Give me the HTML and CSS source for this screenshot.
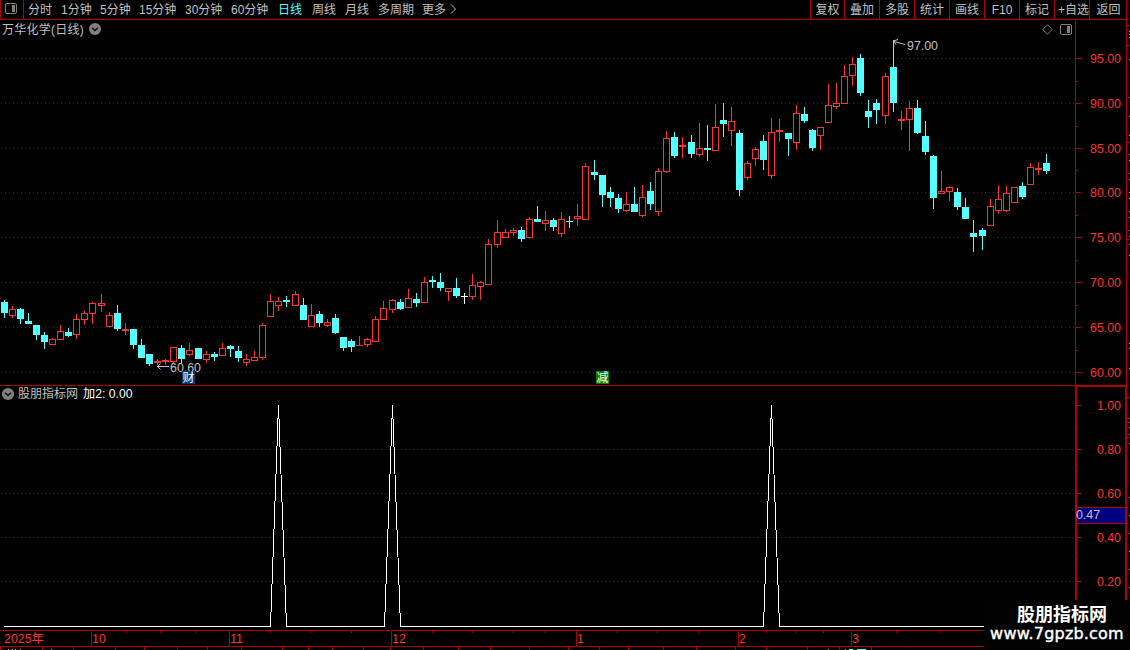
FILE: index.html
```
<!DOCTYPE html>
<html lang="zh-CN">
<head>
    <meta charset="UTF-8">
    <title>万华化学 日线</title>
    <link rel="stylesheet" href="styles.css">
</head>
<body>
    <div class="toolbar">
        <div class="layout-btn">
            <svg width="12" height="11"><rect x="0.5" y="0.5" width="11" height="10" rx="1.5" class="icon-line"/><rect x="7" y="2" width="3" height="7" class="icon-fill"/></svg>
        </div>
        <div class="periods">
            <span>分时</span>
            <span>1分钟</span>
            <span>5分钟</span>
            <span>15分钟</span>
            <span>30分钟</span>
            <span>60分钟</span>
            <span class="active">日线</span>
            <span>周线</span>
            <span>月线</span>
            <span>多周期</span>
            <span>更多</span>
            <svg width="7" height="10"><path d="M1 0.5 L5.5 5 L1 9.5" class="more"/></svg>
        </div>
        <div class="tools">
            <span>复权</span>
            <span>叠加</span>
            <span>多股</span>
            <span>统计</span>
            <span>画线</span>
            <span>F10</span>
            <span>标记</span>
            <span>+自选</span>
            <span>返回</span>
        </div>
    </div>

    <div class="main">
        <div class="charts">
            <div class="panel price-panel">
                <div class="panel-title">
                    <span>万华化学(日线)</span>
                    <svg width="12" height="12"><circle cx="6" cy="6" r="6" class="icon-fill"/><path d="M3 4.7 L6 7.5 L9 4.7" class="chevron"/></svg>
                </div>
                <div class="panel-icons">
                    <svg width="11" height="11"><path d="M5.5 0.7 L10.3 5.5 L5.5 10.3 L0.7 5.5 Z" class="icon-line"/></svg>
                    <svg width="12" height="11"><rect x="0.5" y="0.5" width="11" height="10" rx="1.5" class="icon-line"/><rect x="7" y="2" width="3" height="7" class="icon-fill"/></svg>
                </div>
                <svg id="price" width="1075" height="365" viewBox="0 20 1075 365"></svg>
                <svg id="priceAxis" class="axis" width="51" height="365" viewBox="1075 20 51 365"></svg>
            </div>
            <div class="panel signal-panel">
                <div class="panel-title">
                    <svg width="12" height="12"><circle cx="6" cy="6" r="6" class="icon-fill"/><path d="M3 4.7 L6 7.5 L9 4.7" class="chevron"/></svg>
                    <span>股朋指标网</span>
                    <span class="value">加2: 0.00</span>
                </div>
                <svg id="signal" width="1075" height="245" viewBox="0 385 1075 245"></svg>
                <svg id="signalAxis" class="axis" width="51" height="245" viewBox="1075 385 51 245"></svg>
            </div>
            <svg id="time" class="time" width="1126" height="20" viewBox="0 630 1126 20"></svg>
        </div>
        <svg id="strip" width="4" height="650" viewBox="1126 0 4 650"></svg>
    </div>

    <div class="brand">
        <div class="brand-name">股朋指标网</div>
        <div class="brand-url">www.7gpzb.com</div>
    </div>

    <script src="chart.js"></script>
</body>
</html>
```
FILE: styles.css
```
body {
    margin: 0;
    width: 1130px;
    height: 650px;
    overflow: hidden;
    position: relative;
    background-color: #000;
    color: #c0c0c0;
    font-family: "Liberation Sans", "Noto Sans CJK SC", sans-serif;
    font-size: 12px;
}

svg {
    display: block;
    flex: none;
}

.toolbar {
    display: flex;
    box-sizing: border-box;
    width: 1127px;
    height: 20px;
    line-height: 21px;
    white-space: nowrap;
    border-bottom: 1px solid #b00000;
    border-left: 1px solid #b00000;
}

.layout-btn {
    box-sizing: border-box;
    width: 23px;
    padding: 3px 0 0 4px;
    border-right: 1px solid #b00000;
}

.periods {
    display: grid;
    grid-template-columns: 33px 39px 39px 46px 46px 47px 34px 33px 33px 44px 28px 8px;
    grid-template-rows: 19px;
    padding-left: 4px;
    margin-right: auto;
}

.periods svg {
    margin-top: 4px;
}

.periods .active {
    color: #54ffff;
}

.tools {
    display: grid;
    grid-template-columns: 34px repeat(7, 35px) 38px;
    grid-template-rows: 19px;
}

.tools span {
    border-left: 1px solid #b00000;
    text-align: center;
}

.tools span:nth-child(8) {
    text-align: right;
}

.main {
    display: flex;
}

.charts {
    width: 1126px;
}

#strip {
    margin-top: -20px;
}

.panel {
    display: flex;
    position: relative;
}

.panel-title {
    position: absolute;
    top: 0;
    left: 2px;
    display: flex;
    align-items: center;
    gap: 5px;
    height: 18px;
    line-height: 16px;
}

.price-panel .panel-title span {
    margin-top: 1px;
    letter-spacing: 0.25px;
}

.signal-panel .panel-title {
    gap: 4px;
}

.signal-panel .panel-title .value {
    margin-left: 1px;
    color: #fff;
    font-size: 12.2px;
}

.panel-icons {
    position: absolute;
    top: 4px;
    left: 1042px;
    display: flex;
    gap: 7px;
}

.icon-line {
    fill: none;
    stroke: #808080;
}

.icon-fill {
    fill: #808080;
}

.chevron {
    fill: none;
    stroke: #111;
    stroke-width: 1.5;
}

.more {
    fill: none;
    stroke: #c0c0c0;
}

.frame {
    fill: #b00000;
}

.grid {
    stroke: #a00000;
    stroke-dasharray: 1 3;
    shape-rendering: crispEdges;
}

.up {
    fill: #ff3232;
}

.down {
    fill: #54ffff;
}

.flat {
    fill: #fff;
}

.hollow {
    fill: #000;
}

.signal-line {
    fill: none;
    stroke: #fff;
    shape-rendering: crispEdges;
}

.arrow {
    fill: none;
    stroke: #c0c0c0;
}

.note {
    fill: #c0c0c0;
    font-size: 12.4px;
}

.label {
    fill: #ff3232;
    font-size: 12.4px;
}

.current {
    fill: #000080;
}

.tag-blue {
    fill: #003c78;
}

.tag-green {
    fill: #008000;
}

.tag-text {
    fill: #fff;
    font-size: 12px;
}

.brand {
    position: absolute;
    left: 984px;
    top: 600px;
    width: 146px;
    height: 50px;
    background-color: #020202;
    color: #fff;
    text-align: center;
}

.brand-name {
    margin-left: 10px;
    font-size: 18px;
    font-weight: bold;
    line-height: 30px;
}

.brand-url {
    font-family: "DejaVu Sans", sans-serif;
    font-size: 16px;
    letter-spacing: 0.2px;
    line-height: 8px;
    -webkit-text-stroke: 0.4px #fff;
}
```
FILE: chart.js
```
// x, high, body top, body bottom, low, direction (u / d / f)
const candles = [
    [4,300,302,313,318,'d'], [12,306,309,316,318,'u'], [20,308,309,319,324,'d'], [28,313,321,324,324,'d'],
    [36,325,325,335,340,'d'], [44,332,335,342,349,'d'], [52,338,339,345,345,'u'], [60,325,331,340,340,'u'],
    [68,328,332,336,337,'d'], [76,314,319,335,339,'u'], [84,311,313,320,325,'u'], [92,302,303,314,324,'u'],
    [101,294,303,306,312,'u'], [109,312,315,327,327,'u'], [117,305,313,329,331,'d'], [125,323,329,331,335,'u'],
    [133,329,329,345,349,'d'], [141,339,345,358,358,'d'], [149,354,354,364,366,'d'], [157,359,361,363,365,'u'],
    [165,359,360,362,365,'u'], [173,347,347,362,363,'u'], [181,345,348,359,363,'d'], [189,343,350,355,356,'u'],
    [198,348,348,359,359,'d'], [206,351,354,360,363,'u'], [214,352,354,357,361,'d'], [222,343,348,356,356,'u'],
    [230,345,346,349,357,'d'], [238,346,351,358,362,'d'], [246,354,359,363,366,'u'], [254,351,357,361,361,'u'],
    [262,323,325,358,360,'u'], [270,294,301,317,317,'u'], [278,297,301,306,311,'u'], [286,296,300,302,307,'d'],
    [295,291,294,306,306,'u'], [303,298,305,320,320,'d'], [311,304,315,327,327,'u'], [319,311,314,323,327,'d'],
    [327,319,322,326,327,'u'], [335,314,318,333,334,'d'], [343,337,337,348,351,'d'], [351,339,341,347,352,'d'],
    [359,336,345,346,346,'u'], [367,338,339,345,347,'u'], [375,316,319,342,342,'u'], [383,301,308,320,320,'u'],
    [392,299,300,310,313,'u'], [400,299,302,309,310,'d'], [408,289,298,308,308,'u'], [416,293,299,303,307,'d'],
    [424,277,282,303,303,'u'], [432,276,280,282,288,'d'], [440,273,282,288,291,'d'], [448,288,288,292,301,'u'],
    [456,278,288,296,298,'d'], [464,293,296,297,304,'f'], [472,274,285,297,300,'u'], [480,281,282,287,300,'u'],
    [488,239,244,285,285,'u'], [497,220,232,245,248,'u'], [505,229,232,238,238,'u'], [513,228,230,233,236,'u'],
    [521,227,230,239,242,'d'], [529,217,219,238,239,'u'], [537,206,219,222,222,'d'], [545,211,220,224,231,'u'],
    [553,218,220,227,231,'d'], [561,212,219,234,237,'u'], [569,216,221,222,228,'d'], [577,204,216,219,226,'u'],
    [585,163,166,220,220,'u'], [594,160,172,175,180,'d'], [602,175,175,195,207,'d'], [610,187,192,198,207,'d'],
    [618,194,198,209,213,'d'], [626,192,204,211,212,'u'], [634,187,204,212,212,'d'], [642,185,197,216,217,'u'],
    [650,182,191,204,210,'d'], [658,168,171,212,216,'u'], [666,131,138,172,173,'u'], [674,132,137,156,158,'d'],
    [682,137,145,147,158,'u'], [691,135,142,154,158,'d'], [699,123,148,155,157,'u'], [707,125,148,150,161,'d'],
    [715,104,127,151,151,'u'], [723,103,120,124,137,'d'], [731,107,121,131,146,'u'], [739,130,133,190,196,'d'],
    [747,161,163,178,180,'u'], [755,147,149,159,166,'u'], [763,135,141,160,170,'d'], [771,118,132,176,179,'u'],
    [779,119,130,132,142,'u'], [788,133,133,139,156,'d'], [796,105,113,143,150,'u'], [804,107,114,121,123,'d'],
    [812,129,130,148,151,'d'], [820,127,127,136,150,'u'], [828,84,105,123,123,'u'], [836,83,103,107,109,'u'],
    [844,65,76,104,104,'u'], [852,57,64,76,86,'u'], [860,54,58,93,96,'d'], [868,100,111,117,128,'d'],
    [876,99,103,110,124,'d'], [885,73,76,116,124,'u'], [893,40,67,103,112,'d'], [901,111,119,121,130,'u'],
    [909,101,108,120,151,'u'], [917,100,108,133,134,'d'], [925,121,136,152,155,'d'], [933,155,156,198,209,'d'],
    [941,171,191,194,194,'u'], [949,186,187,192,201,'u'], [957,188,192,207,210,'d'], [965,198,207,219,219,'d'],
    [973,220,233,237,252,'d'], [982,228,230,236,250,'d'], [990,199,206,226,226,'u'], [998,185,199,211,214,'u'],
    [1006,186,193,211,212,'u'], [1014,187,187,203,203,'u'], [1022,182,186,197,199,'d'], [1030,163,167,185,185,'u'],
    [1038,162,168,170,175,'u'], [1046,154,163,171,174,'d']
];

function box(x, y, w, h, cls) {
    return `<rect x="${x}" y="${y}" width="${w}" height="${h}" class="${cls}"/>`;
}

function text(x, y, str, cls, anchor = 'start') {
    return `<text x="${x}" y="${y}" class="${cls}" text-anchor="${anchor}">${str}</text>`;
}

function gridLine(y) {
    return `<line x1="1" x2="1074" y1="${y + 0.5}" y2="${y + 0.5}" class="grid"/>`;
}

function draw(id, parts) {
    document.getElementById(id).innerHTML = parts.join('');
}

// Price panel
const priceLevels = [[58, '95.00'], [103, '90.00'], [148, '85.00'], [192, '80.00'],
                     [237, '75.00'], [282, '70.00'], [327, '65.00'], [372, '60.00']];
const names = { u: 'up', d: 'down', f: 'flat' };
const price = priceLevels.map(([y]) => gridLine(y));

candles.forEach(([x, high, top, bottom, low, dir]) => {
    price.push(box(x, high, 1, low - high, names[dir]));
    price.push(box(x - 3, top, 7, bottom - top, names[dir]));
    if (dir === 'u' && bottom - top > 2) {
        price.push(box(x - 2, top + 1, 5, bottom - top - 2, 'hollow'));
    }
});
price.push('<path d="M157 366.5 H169 M160.5 363.5 L157.5 366.5 L160.5 369.5" class="arrow"/>');
price.push(text(170, 372, '60.60', 'note'));
price.push('<path d="M905 44.5 L894 41.5 M898 39.5 L893.5 41 L896 44.5" class="arrow"/>');
price.push(text(907, 50, '97.00', 'note'));
price.push(box(182, 371, 13, 13, 'tag-blue'), text(188.5, 382, '财', 'tag-text', 'middle'));
price.push(box(596, 371, 13, 13, 'tag-green'), text(602.5, 382, '减', 'tag-text', 'middle'));
draw('price', price);

const priceAxis = [box(1075, 20, 1, 365, 'frame')];
priceLevels.forEach(([y, label]) => {
    priceAxis.push(box(1076, y, 5, 1, 'frame'), text(1121, y + 5, label, 'label', 'end'));
});
[81, 126, 170, 215, 260, 305, 350].forEach(y => priceAxis.push(box(1076, y, 2, 1, 'frame')));
draw('priceAxis', priceAxis);

// Signal panel
const signalLevels = [[405, '1.00'], [449, '0.80'], [493, '0.60'], [537, '0.40'], [581, '0.20']];
const signal = [box(0, 385, 1075, 1, 'frame')];
signalLevels.slice(1).forEach(([y]) => signal.push(gridLine(y)));
let points = '4,626.5';
[[270, 278, 286], [384, 392, 400], [763, 771, 779]].forEach(([start, peak, end]) => {
    points += ` ${start + 0.5},626.5 ${peak + 0.5},405 ${end + 0.5},626.5`;
});
signal.push(`<polyline points="${points} 1046.5,626.5" class="signal-line"/>`);
draw('signal', signal);

const signalAxis = [box(1075, 385, 51, 2, 'frame'), box(1075, 385, 2, 245, 'frame'), box(1125, 385, 1, 245, 'frame')];
signalLevels.forEach(([y, label]) => {
    signalAxis.push(box(1077, y, 4, 1, 'frame'), text(1121, y + 5, label, 'label', 'end'));
});
[427, 471, 559].forEach(y => signalAxis.push(box(1077, y, 1, 1, 'frame')));
signalAxis.push(box(1077, 507, 48, 17, 'frame'), box(1077, 508, 48, 15, 'current'), text(1076, 519, '0.47', 'note'));
draw('signalAxis', signalAxis);

// Time axis
const time = [box(0, 630, 1126, 1, 'frame'), box(0, 646, 1126, 1, 'frame'), text(4, 643, '2025年', 'label')];
[[91, '10'], [229, '11'], [391, '12'], [576, '1'], [738, '2'], [851, '3']].forEach(([x, label]) => {
    time.push(box(x, 631, 1, 15, 'frame'), text(x + 1, 643, label, 'label'));
});
[126, 160, 195, 270, 310, 351, 432, 472, 513, 545, 617, 657, 698, 766, 795, 823, 896, 940].forEach(x => {
    time.push(box(x, 631, 1, 2, 'frame'));
});
[0, 42, 73, 115, 144, 177, 207, 241, 282, 308, 332, 363, 390, 423, 458, 490, 529,
 568, 599, 628, 663, 696, 735, 766, 807, 839, 871].forEach(x => time.push(box(x, 647, 1, 3, 'frame')));
[8, 12, 15, 20, 51, 828, 845].forEach(x => time.push(box(x, 649, 1, 1, 'note')));
time.push(box(849, 649, 4, 1, 'down'), box(857, 649, 9, 1, 'down'));
draw('time', time);

// Edge of the quote list on the right
const strip = [box(1126, 0, 1, 650, 'frame')];
[25, 45, 142, 239, 397, 418, 437].forEach(y => strip.push(box(1127, y, 3, 1, 'frame')));
[31, 34, 37, 59, 97, 116, 135, 154, 160, 173, 179, 192, 198, 211, 217, 230, 236, 244, 255,
 343, 348, 368, 422, 427, 434, 443, 497, 515, 533, 551, 569, 587].forEach(y => strip.push(box(1129, y, 1, 1, 'note')));
draw('strip', strip);
```
